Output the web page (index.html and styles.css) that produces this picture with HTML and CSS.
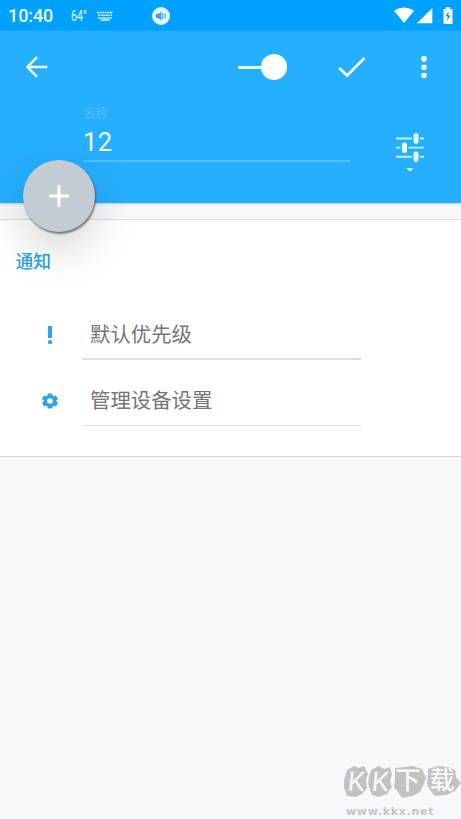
FILE: index.html
```html
<!DOCTYPE html>
<html lang="zh-CN">
<head>
<meta charset="utf-8">
<title>通知</title>
<link rel="stylesheet" href="styles.css">
</head>
<body>
<div class="screen">
  <div class="status">
    <span class="clock">10:40</span>
    <span class="temp">64°</span>
    <svg class="keyboard" width="16" height="10" viewBox="0 0 16 10"><g fill="none" stroke="#d9f8ff" stroke-width="1.5"><path d="M0 1.5h16M1 4.3h14" stroke-dasharray="2 .6"/><path d="M1 7h14" stroke-dasharray="2 .5"/><path d="M3.5 9h9"/></g></svg>
    <svg class="sound" width="18" height="18" viewBox="0 0 18 18"><circle cx="9" cy="9" r="9" fill="#e0f8ff"/><path d="M4 7h2.2L9.4 4.5v9L6.2 11H4z" fill="#3f9fdc"/><path d="M10.8 6v6M12.8 6.5q1.3 2.5 0 5" fill="none" stroke="#58b0e6" stroke-width="1.3"/></svg>
    <svg class="wifi" width="20" height="17" viewBox="0 0 20 17"><path d="M0 3.8Q10-3 20 3.8L10 16z" fill="#fff"/></svg>
    <svg class="signal" width="16" height="16" viewBox="0 0 16 16"><path d="M15.3 0v15.3H0z" fill="#fff"/></svg>
    <svg class="battery" width="10" height="17" viewBox="0 0 10 17"><path d="M3 0h4v2h2.5v15H.5V2H3z" fill="#fff"/><path d="M5.7 4.5 2.5 9.3h2.2L4 14l3.5-5.5H5.3z" fill="#0a94e8"/></svg>
  </div>
  <header class="header">
    <div class="toolbar">
      <svg class="back" width="22" height="22" viewBox="0 0 22 22"><path d="M21.3 11H2M11 1.2 1.4 11l9.6 9.8" fill="none" stroke="#f2fdff" stroke-width="2.4"/></svg>
      <div class="toggle"><span class="track"></span><span class="knob"></span></div>
      <svg class="check" width="28" height="22" viewBox="0 0 28 22"><path d="M1.3 12 9 19.5 26.5 2" fill="none" stroke="#f5feff" stroke-width="2.7"/></svg>
      <svg class="more" width="6" height="24" viewBox="0 0 6 24"><g fill="#f2fdff"><circle cx="3" cy="3.9" r="2.8"/><circle cx="3" cy="12.2" r="2.8"/><circle cx="3" cy="20.5" r="2.8"/></g></svg>
    </div>
    <div class="edit">
      <div class="field"><label class="label">名称</label><div class="value">12</div></div>
      <svg class="tune" width="28" height="42" viewBox="0 0 28 42"><path d="M0 6.5h16m8 0h4M0 15.6h4.5m8 0H28M0 24.7h16m8 0h4" stroke="#b9f1ff" stroke-width="1.9"/><g fill="#dff7ff"><rect x="17.5" y="1.2" width="5" height="10.6" rx="2"/><rect x="6" y="10.4" width="5" height="10.6" rx="2"/><rect x="17.5" y="19.4" width="5" height="10.6" rx="2"/></g><path d="M10.3 36h7.4L14 39.8z" fill="#d0f5ff"/></svg>
    </div>
    <div class="fab"><svg width="20" height="22" viewBox="0 0 20 22"><path d="M0 11h20M10 .5v21" stroke="#fff" stroke-width="2.9"/></svg></div>
  </header>
  <section class="card">
    <h2 class="title">通知</h2>
    <div class="row first">
      <svg class="icon" width="16" height="20" viewBox="0 0 16 20"><path d="M5.9 1h4.2v12H5.9z" fill="#2fa5ea"/><circle cx="8" cy="17.2" r="2.1" fill="#2fa5ea"/></svg>
      <div class="text">默认优先级</div>
    </div>
    <div class="row">
      <svg class="icon" width="16" height="16" viewBox="0 0 16 16"><path fill="#2fa5ea" fill-rule="evenodd" d="M5.9.4h4.2l.5 2.2 1.3.7 2.1-.7 2 3.4-1.6 1.5v1L16 10l-2 3.4-2.1-.7-1.3.7-.5 2.2H5.9l-.5-2.2-1.3-.7-2.1.7L0 10l1.6-1.5v-1L0 6l2-3.4 2.1.7 1.3-.7zM8 5.2a2.8 2.8 0 1 0 0 5.6 2.8 2.8 0 0 0 0-5.6z"/></svg>
      <div class="text">管理设备设置</div>
    </div>
  </section>
  <footer class="mark">
    <div class="brand"><svg class="blobs" width="117" height="34" viewBox="0 0 117 34"><g fill="#c1c2c4"><path d="m3 5 7-4 5 2 5-2 4 8-2 6 1 8-5 6-6 3-9-1-2-6-2-6 2-7z"/><path d="m27 5 8-4 5 3 6-2 2 8-2 6 2 6-5 7-8 3-7-2-2-5-2-6 1-7z"/><path d="m51 3 9-1 9-1 9 3 4 9-3 8-3 6-8 4-10 2-4-6-4-5 1-8z"/><path d="m84 4 10-3 10 1 7 3 1 7 5 6-6 8-9 4-11 1-5-6-3-6 1-9z"/></g></svg><span class="k">K</span><span class="k">K</span><span class="c">下</span><span class="c last">载</span></div>
    <div class="site">www.kkx.net</div>
  </footer>
</div>
</body>
</html>
```
FILE: styles.css
```css
* { box-sizing: border-box; }
body { margin: 0; font-family: Roboto, "Noto Sans CJK SC", sans-serif; }
svg { display: block; flex: none; }
.screen { width: 461px; height: 819px; display: flex; flex-direction: column; background: #f6f8fb; overflow: hidden; }
.status { height: 31px; flex: none; display: flex; align-items: center; background: #00a1ff; color: #e6fbff; padding: 0 8px; }
.clock { width: 63px; font-size: 18px; font-weight: 500; line-height: 31px; letter-spacing: -.1px; }
.temp { width: 26px; font-size: 14px; transform: scaleX(.76); transform-origin: left; }
.sound { margin-left: 39px; }
.wifi { margin-left: auto; }
.signal { margin-left: 3px; }
.battery { margin-left: 10px; }
.header { position: relative; height: 172px; flex: none; background: #26aeff; box-shadow: 0 1px 2px #bfc9d1; }
.toolbar { height: 72px; display: flex; align-items: center; padding-left: 26px; }
.toggle { display: flex; align-items: center; width: 49px; margin-left: 190px; }
.track { height: 3px; flex: 1; background: #e9fbff; }
.knob { width: 26px; height: 26px; border-radius: 50%; background: #fff; }
.check { margin-left: 51px; }
.more { margin-left: 55px; }
.edit { display: flex; padding-left: 83px; }
.field { width: 267px; height: 59px; border-bottom: 2px solid #52bfff; }
.label { display: block; font-size: 12.5px; line-height: 21px; color: #54bcf3; }
.value { font-size: 25.5px; line-height: 36px; color: #f0fcff; letter-spacing: .3px; }
.tune { margin: 29px 0 0 46px; }
.fab { position: absolute; left: 23px; top: 129px; width: 72px; height: 72px; border-radius: 50%; display: flex; align-items: center; justify-content: center; background: #c3cbd3; box-shadow: 1px 2px 2px rgba(70,75,80,.7), 0 18px 44px rgba(0,0,0,.17); z-index: 1; }
.card { flex: none; height: 238px; margin-top: 16px; background: #fff; border-top: 1px solid #dadde0; border-bottom: 1px solid #d8dde0; }
.title { margin: 27px 0 0 15.5px; font-size: 17.8px; line-height: 30px; font-weight: 500; color: #2ba4e6; }
.row { height: 66px; display: flex; align-items: center; padding-left: 42px; }
.first { margin-top: 17px; }
.text { width: 279px; height: 66px; margin-left: 24px; padding: 23px 8px 0; border-bottom: 1px solid #dbe1e4; font-size: 20.4px; line-height: 36px; color: #757575; font-weight: 400; }
.first .text { border-bottom: 2px solid #d8e2e6; }
.row .icon { margin-top: 16px; }
.mark { margin-top: auto; padding-left: 344px; height: 54px; }
.brand { position: relative; display: flex; height: 38px; color: #f7f8fa; line-height: 34px; }
.blobs { position: absolute; left: 0; top: 0; }
.k { position: relative; width: 24px; text-align: center; font-size: 27px; font-weight: 400; transform: skewX(-5deg); }
.c { position: relative; width: 32px; text-align: center; font-size: 25px; line-height: 32px; font-weight: 500; }
.last { margin-left: 2px; }
.site { font-family: "DejaVu Sans", sans-serif; font-size: 11px; line-height: 18px; padding-left: 2px; color: #c4c5c8; font-weight: 700; letter-spacing: .7px; }
```
